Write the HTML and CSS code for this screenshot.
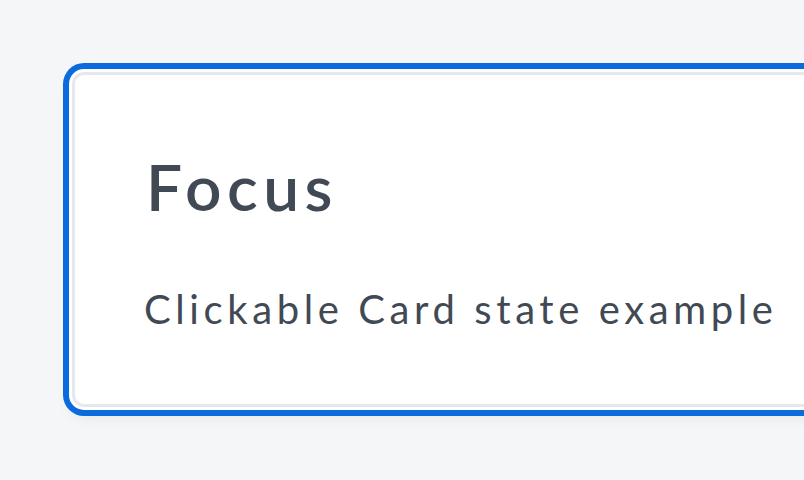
FILE: index.html
```html
<!DOCTYPE html>
<html lang="en">
<head>
  <meta charset="UTF-8" />
  <title>Clickable Card</title>
  <link rel="stylesheet" href="styles.css">
</head>
<body>
  <div class="page">
    <a class="card card--focus" href="#">
      <h2 class="card-title">Focus</h2>
      <p class="card-text">Clickable Card state example</p>
    </a>
  </div>
</body>
</html>
```

FILE: styles.css
```css
body {
  margin: 0;
  background: #f5f6f8;
  font-family: Lato, "Open Sans", sans-serif;
}

.page {
  height: 100vh;
  box-sizing: border-box;
  padding: 72px 0 0 72px;
  overflow: hidden;
}

.card {
  display: flex;
  flex-direction: column;
  width: 900px;
  box-sizing: border-box;
  height: 335px;
  padding: 80px 70px 0 70px;
  background: #fff;
  border: 3px solid #e6e8ee;
  border-radius: 12px;
  color: #414a54;
  text-decoration: none;
}

/* focus ring: white gap + blue outline */
.card--focus {
  box-shadow: 0 0 0 3px #fff, 0 0 0 9px #0a6cdc, 0 8px 16px rgba(30, 40, 60, 0.1);
}

.card-title {
  margin: 0 0 0 1px;
  font-size: 64px;
  font-weight: 600;
  letter-spacing: 5.5px;
  line-height: 1;
}

.card-text {
  margin: 70px 0 0 -1px;
  font-size: 40px;
  letter-spacing: 4.6px;
  line-height: 1;
}
```
